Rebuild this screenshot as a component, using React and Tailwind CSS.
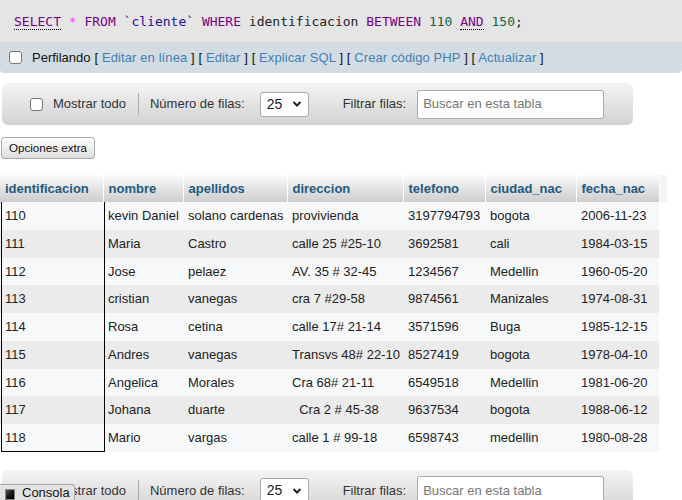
import React from "react";

const rows = [
  ["110", "kevin Daniel", "solano cardenas", "provivienda", "3197794793", "bogota", "2006-11-23"],
  ["111", "Maria", "Castro", "calle 25 #25-10", "3692581", "cali", "1984-03-15"],
  ["112", "Jose", "pelaez", "AV. 35 # 32-45", "1234567", "Medellin", "1960-05-20"],
  ["113", "cristian", "vanegas", "cra 7 #29-58", "9874561", "Manizales", "1974-08-31"],
  ["114", "Rosa", "cetina", "calle 17# 21-14", "3571596", "Buga", "1985-12-15"],
  ["115", "Andres", "vanegas", "Transvs 48# 22-10", "8527419", "bogota", "1978-04-10"],
  ["116", "Angelica", "Morales", "Cra 68# 21-11", "6549518", "Medellin", "1981-06-20"],
  ["117", "Johana", "duarte", "\u00a0\u00a0Cra 2 # 45-38", "9637534", "bogota", "1988-06-12"],
  ["118", "Mario", "vargas", "calle 1 # 99-18", "6598743", "medellin", "1980-08-28"],
];

const columns = [
  ["identificacion", "w-[103px]"],
  ["nombre", "w-[80px]"],
  ["apellidos", "w-[104px]"],
  ["direccion", "w-[116px]"],
  ["telefono", "w-[82px]"],
  ["ciudad_nac", "w-[91px]"],
  ["fecha_nac", "w-[83px]"],
];

const Checkbox = () => (
  <span className="inline-block w-[13px] h-[13px] rounded-[3px] border border-[#767676] bg-white" />
);

const Bracket = ({ children }) => (
  <>
    <span className="text-[#111]">[</span>
    <span className="text-[#3f7fb6]"> {children} </span>
    <span className="text-[#111]">]</span>
  </>
);

const Toolbar = () => (
  <div className="ml-[2px] w-[631px] h-[42px] rounded-md bg-gradient-to-b from-[#f4f4f4] to-[#d2d2d2] flex items-center text-[13px] text-[#333]">
    <div className="ml-[28px] flex items-center">
      <Checkbox />
      <span className="ml-[10px]">Mostrar todo</span>
    </div>
    <span className="ml-[12px] w-px h-[22px] bg-[#aaaaaa]" />
    <span className="ml-[11px]">Número de filas:</span>
    <div className="ml-[15px] w-[49px] h-[25px] bg-white border border-[#aaaaaa] rounded-[3px] flex items-center justify-between pl-[6px] pr-[6px] text-[14px] text-[#222]">
      <span>25</span>
      <svg width="10" height="8" viewBox="0 0 10 8">
        <path d="M1.5 2 L5 5.5 L8.5 2" fill="none" stroke="#222" strokeWidth="2" />
      </svg>
    </div>
    <span className="ml-[34px]">Filtrar filas:</span>
    <div className="ml-[11px] w-[187px] h-[29px] bg-white border border-[#aaaaaa] rounded-[2px] flex items-center pl-[5px] text-[#777]">
      Buscar en esta tabla
    </div>
  </div>
);

export default function App() {
  return (
    <div className="relative w-[682px] h-[500px] overflow-hidden bg-white font-['Liberation_Sans',Arial,sans-serif]">
      <div className="rounded-b-[4px] overflow-hidden">
        <div className="h-[42px] bg-[#e5e5e5] flex items-center pl-[14px] pt-[2px] font-['DejaVu_Sans_Mono',monospace] text-[13px] whitespace-pre">
          <span className="text-[#770088] border-b border-dotted border-black leading-[15px]">SELECT</span>
          <span> </span>
          <span className="text-[#ee55ee]">*</span>
          <span> </span>
          <span className="text-[#770088]">FROM</span>
          <span> </span>
          <span className="text-[#221199]">`cliente`</span>
          <span> </span>
          <span className="text-[#770088]">WHERE</span>
          <span className="text-[#222]"> identificacion </span>
          <span className="text-[#770088]">BETWEEN</span>
          <span> </span>
          <span className="text-[#116644]">110</span>
          <span> </span>
          <span className="text-[#770088] border-b border-dotted border-black leading-[15px]">AND</span>
          <span> </span>
          <span className="text-[#116644]">150</span>
          <span className="text-[#222]">;</span>
        </div>
        <div className="h-[31px] bg-[#d3dce3] flex items-center pl-[9px] text-[13px] text-[#111] whitespace-pre">
          <Checkbox />
          <span className="ml-[10px]">Perfilando</span>
          <span className="ml-[4px] tracking-[0.1px]">
            <Bracket>Editar en línea</Bracket> <Bracket>Editar</Bracket> <Bracket>Explicar SQL</Bracket>{" "}
            <Bracket>Crear código PHP</Bracket> <Bracket>Actualizar</Bracket>
          </span>
        </div>
      </div>

      <div className="mt-[10px]">
        <Toolbar />
      </div>

      <button className="mt-[12px] ml-[1px] h-[22px] px-[7px] rounded-[3px] border border-[#aaaaaa] bg-gradient-to-b from-[#ffffff] to-[#dddddd] text-[11.6px] text-[#111] flex items-center">
        Opciones extra
      </button>

      <div className="relative mt-[16px]">
        <table className="table-fixed border-collapse text-[13px] text-[#222]">
          <thead>
            <tr className="h-[27px]">
              {columns.map(([name, w]) => (
                <th
                  key={name}
                  className={`${w} text-left font-bold text-[#235a81] pl-[5px] border-r border-white bg-gradient-to-b from-[#fafafa] to-[#cdcdcd]`}
                >
                  {name}
                </th>
              ))}
              <th className="w-[8px] bg-[#f3f4f6]" />
            </tr>
          </thead>
          <tbody>
            {rows.map((r, i) => (
              <tr key={r[0]} className={`h-[27.75px] ${i % 2 === 0 ? "bg-[#f7f8fa]" : "bg-[#ebebeb]"}`}>
                {r.map((c, j) => (
                  <td key={j} className="pl-[5px] whitespace-nowrap overflow-visible">
                    {c}
                  </td>
                ))}
                <td className="bg-white" />
              </tr>
            ))}
          </tbody>
        </table>
        <div className="absolute left-[1px] top-[27px] w-[104px] h-[250px] border-l-[1.5px] border-r-[1.5px] border-b-[1.5px] border-black" />
      </div>

      <div className="mt-[18px]">
        <Toolbar />
      </div>

      <div className="absolute left-0 bottom-0 w-[75px] h-[16px] bg-[#e3e3e3] border-t border-r border-[#aaaaaa] rounded-tr-[3px] flex items-end pl-[5px] text-[13px] text-[#111] leading-[14px]">
        <span className="w-[10px] h-[11px] bg-gradient-to-br from-[#555] to-[#000] border border-[#888]" />
        <span className="ml-[7px]">Consola</span>
      </div>
    </div>
  );
}
